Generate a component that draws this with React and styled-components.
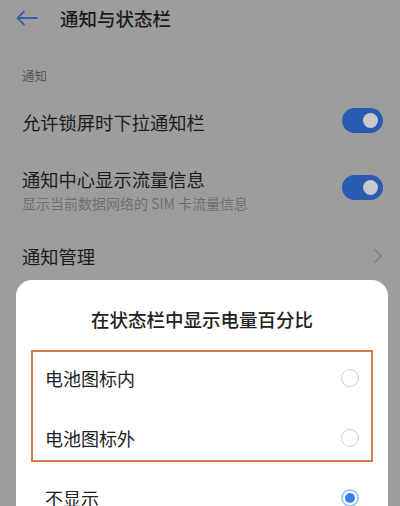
import React from "react";
import styled, { createGlobalStyle } from "styled-components";

const GlobalStyle = createGlobalStyle`
  html, body {
    margin: 0;
    padding: 0;
    background: #9d9d9d;
  }
  * {
    box-sizing: border-box;
  }
`;

const Screen = styled.div`
  position: relative;
  width: 400px;
  height: 506px;
  overflow: hidden;
  background: #9d9d9d;
  font-family: "Noto Sans CJK SC", "Noto Sans", sans-serif;
  color: #1b1b1b;
`;

const Header = styled.div`
  display: flex;
  align-items: center;
  height: 36px;
  padding-left: 16px;
  gap: 22px;
`;

const HeaderTitle = styled.div`
  font-size: 18.5px;
  font-weight: 500;
  line-height: 36px;
`;

const SectionLabel = styled.div`
  height: 44px;
  margin-top: 17px;
  padding-left: 22px;
  display: flex;
  align-items: center;
  font-size: 12.5px;
  color: #555;
`;

const Row = styled.div`
  display: flex;
  align-items: center;
  justify-content: space-between;
  height: ${(p) => p.$h}px;
  padding: 0 17px 0 22px;
`;

const RowText = styled.div`
  display: flex;
  flex-direction: column;
`;

const RowTitle = styled.div`
  font-size: 18.3px;
  line-height: 24px;
`;

const RowSub = styled.div`
  font-size: 14px;
  line-height: 24px;
  color: #6e6e6e;
`;

const Toggle = styled.div`
  width: 41px;
  height: 25px;
  border-radius: 13px;
  background: #2a5bb3;
  display: flex;
  align-items: center;
  justify-content: flex-end;
  padding-right: 5px;
  margin-top: ${(p) => p.$dy || 0}px;
`;

const Knob = styled.div`
  width: 15px;
  height: 15px;
  border-radius: 50%;
  background: #c9c9c9;
`;

const Dialog = styled.div`
  position: absolute;
  top: 280px;
  left: 16px;
  width: 372px;
  height: 260px;
  background: #fff;
  border-radius: 16px;
  color: #222;
`;

const DialogTitle = styled.div`
  text-align: center;
  font-size: 18.5px;
  line-height: 26px;
  padding: 26px 0 16px;
  font-weight: 500;
`;

const Option = styled.div`
  display: flex;
  align-items: center;
  justify-content: space-between;
  height: 60px;
  padding: 0 29px;
  font-size: 18px;
`;

const Radio = styled.div`
  width: 18px;
  height: 18px;
  border-radius: 50%;
  border: ${(p) => (p.$on ? "2px solid #a7c6f4" : "1.5px solid #cfcfcf")};
  padding: 2px;
  display: flex;
  &::after {
    content: "";
    flex: 1;
    border-radius: 50%;
    background: ${(p) => (p.$on ? "#3a7ff0" : "transparent")};
  }
`;

const Highlight = styled.div`
  position: absolute;
  left: 15px;
  top: 70px;
  width: 342px;
  height: 112px;
  border: 2px solid #d8794f;
  pointer-events: none;
`;

const BackArrow = () => (
  <svg width="22" height="16" viewBox="0 0 22 16" fill="none">
    <path
      d="M21 8H2M8 1.5L1.5 8L8 14.5"
      stroke="#3b5ea6"
      strokeWidth="1.8"
      strokeLinecap="round"
      strokeLinejoin="round"
    />
  </svg>
);

const Chevron = () => (
  <svg width="10" height="16" viewBox="0 0 10 16" fill="none">
    <path
      d="M2 2L8 8L2 14"
      stroke="#7c7c7c"
      strokeWidth="1.4"
      strokeLinecap="round"
      strokeLinejoin="round"
    />
  </svg>
);

const options = [
  { label: "电池图标内", on: false },
  { label: "电池图标外", on: false },
  { label: "不显示", on: true },
];

export default function App() {
  return (
    <>
      <GlobalStyle />
      <Screen>
        <Header>
          <BackArrow />
          <HeaderTitle>通知与状态栏</HeaderTitle>
        </Header>
        <SectionLabel>通知</SectionLabel>
        <Row $h={50}>
          <RowTitle>允许锁屏时下拉通知栏</RowTitle>
          <Toggle $dy={-4}>
            <Knob />
          </Toggle>
        </Row>
        <Row $h={88}>
          <RowText>
            <RowTitle>通知中心显示流量信息</RowTitle>
            <RowSub>显示当前数据网络的 SIM 卡流量信息</RowSub>
          </RowText>
          <Toggle $dy={-8}>
            <Knob />
          </Toggle>
        </Row>
        <Row $h={42}>
          <RowTitle>通知管理</RowTitle>
          <Chevron />
        </Row>

        <Dialog>
          <DialogTitle>在状态栏中显示电量百分比</DialogTitle>
          {options.map((o) => (
            <Option key={o.label}>
              <span>{o.label}</span>
              <Radio $on={o.on} />
            </Option>
          ))}
          <Highlight />
        </Dialog>
      </Screen>
    </>
  );
}
